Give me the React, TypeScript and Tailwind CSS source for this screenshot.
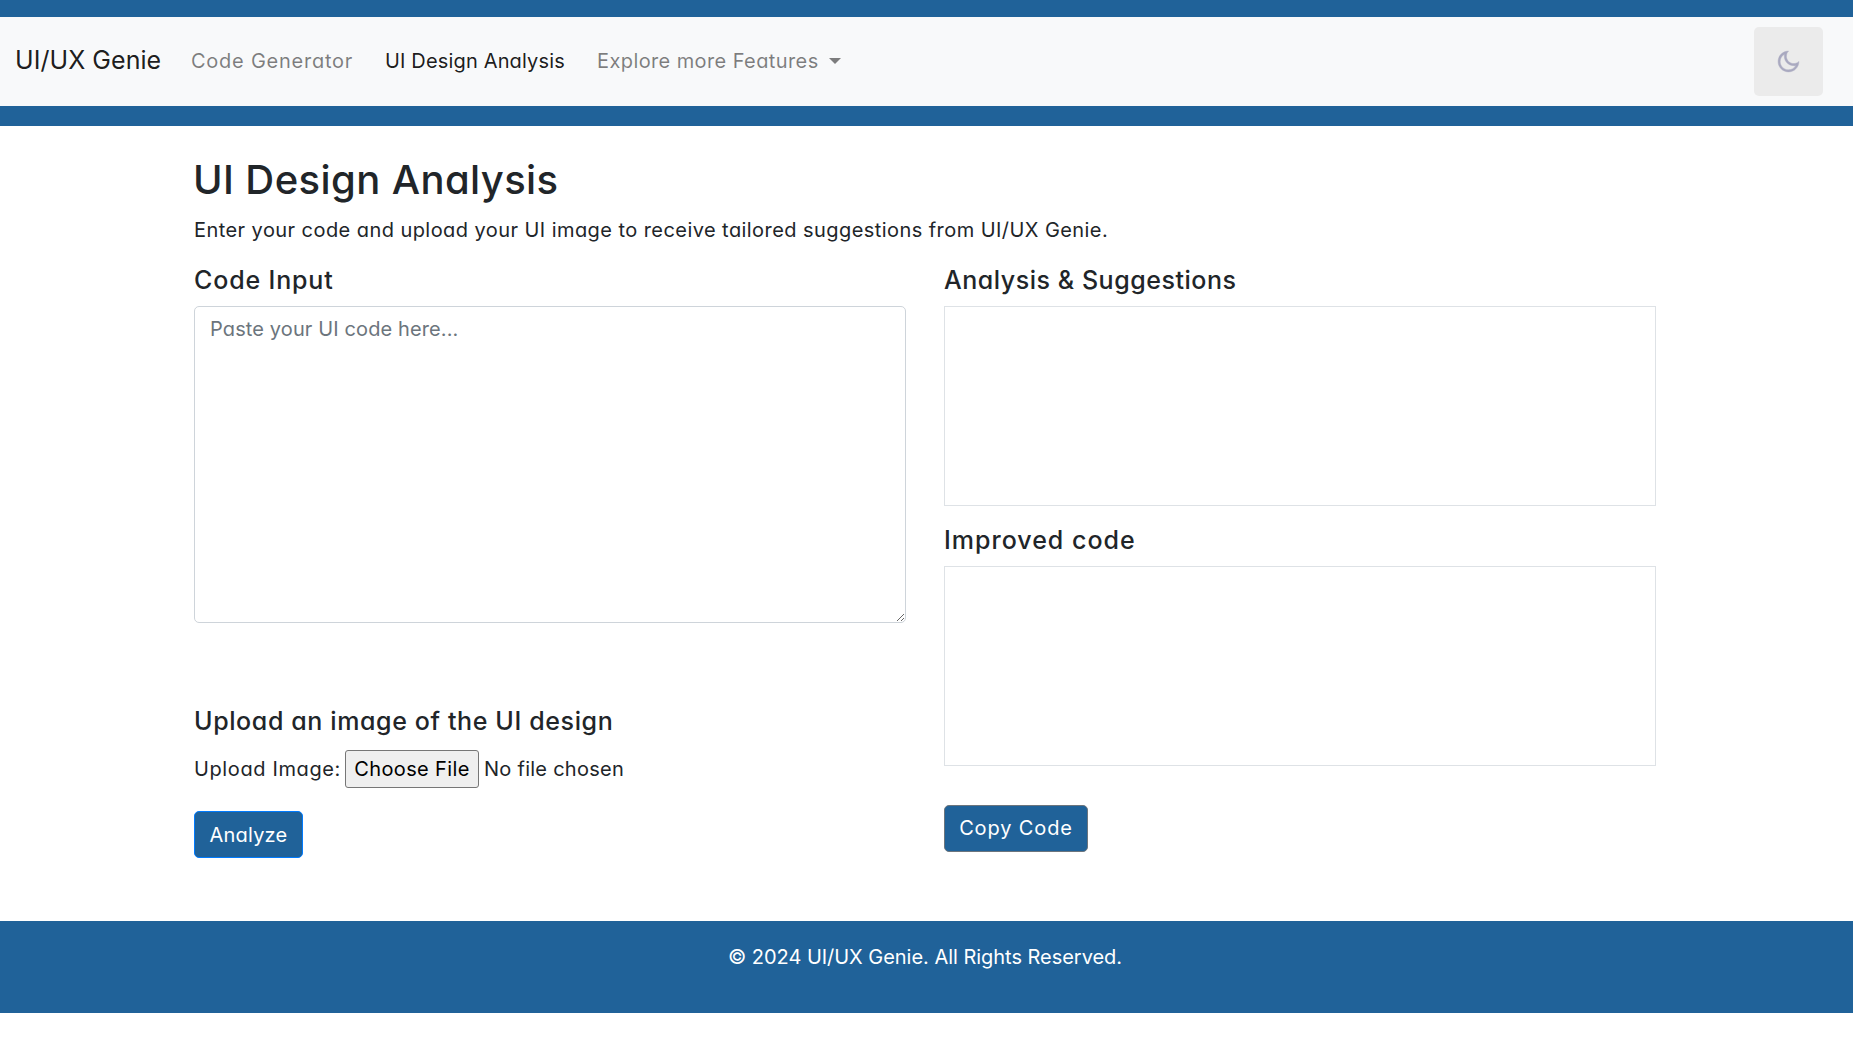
function MoonIcon() {
  return (
    <svg
      viewBox="0 0 24 24"
      className="h-[25px] w-[25px] fill-[#a9a9c0] stroke-[#a9a9c0] stroke-[0.4]"
    >
      <path d="M10 7C10 10.866 13.134 14 17 14C18.9584 14 20.729 13.1957 21.9995 11.8995C22 11.933 22 11.9665 22 12C22 17.5228 17.5228 22 12 22C6.47715 22 2 17.5228 2 12C2 6.47715 6.47715 2 12 2C12.0335 2 12.067 2 12.1005 2.00049C10.8043 3.27098 10 5.04157 10 7ZM4 12C4 16.4183 7.58172 20 12 20C15.0583 20 17.7158 18.2839 19.062 15.7621C18.3945 15.9187 17.7035 16 17 16C12.0294 16 8 11.9706 8 7C8 6.29648 8.08133 5.60547 8.2379 4.938C5.71611 6.28423 4 8.9417 4 12Z" />
    </svg>
  );
}

function Navbar() {
  return (
    <header className="border-t-[17px] border-b-[20px] border-[#206299]">
      <nav className="flex h-[89px] items-center bg-[#f8f9fa] pr-[30px] pl-[15px]">
        <a className="mr-[29px] w-[147px] pb-1 text-[25px] leading-[38px] tracking-[0.05px] text-black/90">
          UI/UX Genie
        </a>
        <a className="w-[194px] pb-0.5 tracking-[0.75px] text-black/50">Code Generator</a>
        <a className="w-[212px] pb-0.5 tracking-[0.16px] text-black/90">UI Design Analysis</a>
        <a className="flex items-center text-black/50">
          <span className="w-[232px] pb-0.5 tracking-[0.4px]">Explore more Features</span>
          <svg viewBox="0 0 12 6" className="-mt-0.5 h-[6px] w-[12px] fill-current">
            <path d="M0 0h12L6 6z" />
          </svg>
        </a>
        <button className="ml-auto flex h-[69px] w-[69px] items-center justify-center rounded-[5px] bg-[#ebebeb]">
          <MoonIcon />
        </button>
      </nav>
    </header>
  );
}

function InputColumn() {
  return (
    <section className="w-[712px]">
      <h5 className="text-[25px] leading-[30px] font-medium tracking-[0.85px]">Code Input</h5>
      <textarea
        className="mt-[11px] block h-[317px] w-full resize rounded-[5px] border border-[#ced4da] px-[15px] pt-[7px] leading-[30px] tracking-[0.12px] placeholder:text-[#6c757d]"
        placeholder="Paste your UI code here..."
      />
      <h5 className="mt-[83px] text-[25px] leading-[30px] font-medium tracking-[0.62px]">
        Upload an image of the UI design
      </h5>
      <div className="mt-3.5 flex h-[38px] items-center">
        <label className="w-[151px] tracking-[0.62px]">Upload Image:</label>
        <button className="h-[38px] w-[134px] rounded-[3px] border border-[#767676] bg-[#efefef] tracking-[0.37px] text-black">
          Choose File
        </button>
        <span className="ml-[5px] tracking-[0.26px]">No file chosen</span>
      </div>
      <button className="mt-[23px] block h-[47px] w-[109px] rounded-[5px] border border-[#007bff] bg-[#206299] tracking-[0.2px] text-white">
        Analyze
      </button>
    </section>
  );
}

function OutputColumn() {
  return (
    <section className="w-[712px]">
      <h5 className="text-[25px] leading-[30px] font-medium tracking-[0.54px]">
        Analysis &amp; Suggestions
      </h5>
      <div className="mt-[11px] h-[200px] border border-[#dee2e6]" />
      <h5 className="mt-[19px] text-[25px] leading-[30px] font-medium tracking-[1px]">
        Improved code
      </h5>
      <div className="mt-[11px] h-[200px] border border-[#dee2e6]" />
      <button className="mt-[39px] block h-[47px] w-[144px] rounded-[5px] border border-[#6c757d] bg-[#206299] pb-0.5 tracking-[0.88px] text-white">
        Copy Code
      </button>
    </section>
  );
}

export default function App() {
  return (
    <div className="min-h-[1044px] bg-white font-['Inter',sans-serif] text-[20px] leading-[30px] text-[#212529] [font-feature-settings:'cv11']">
      <Navbar />
      <main className="ml-[194px] h-[795px] w-[1462px] pt-[30px]">
        <h2 className="-ml-px text-[40px] leading-[48px] font-medium tracking-[0.4px]">
          UI Design Analysis
        </h2>
        <p className="mt-[11px] tracking-[0.435px]">
          Enter your code and upload your UI image to receive tailored suggestions from UI/UX Genie.
        </p>
        <div className="mt-5 flex justify-between">
          <InputColumn />
          <OutputColumn />
        </div>
      </main>
      <footer className="h-[92px] bg-[#206299] pt-[21px] pr-[3px] text-center tracking-[-0.03px] text-white">
        © 2024 UI/UX Genie. All Rights Reserved.
      </footer>
    </div>
  );
}
